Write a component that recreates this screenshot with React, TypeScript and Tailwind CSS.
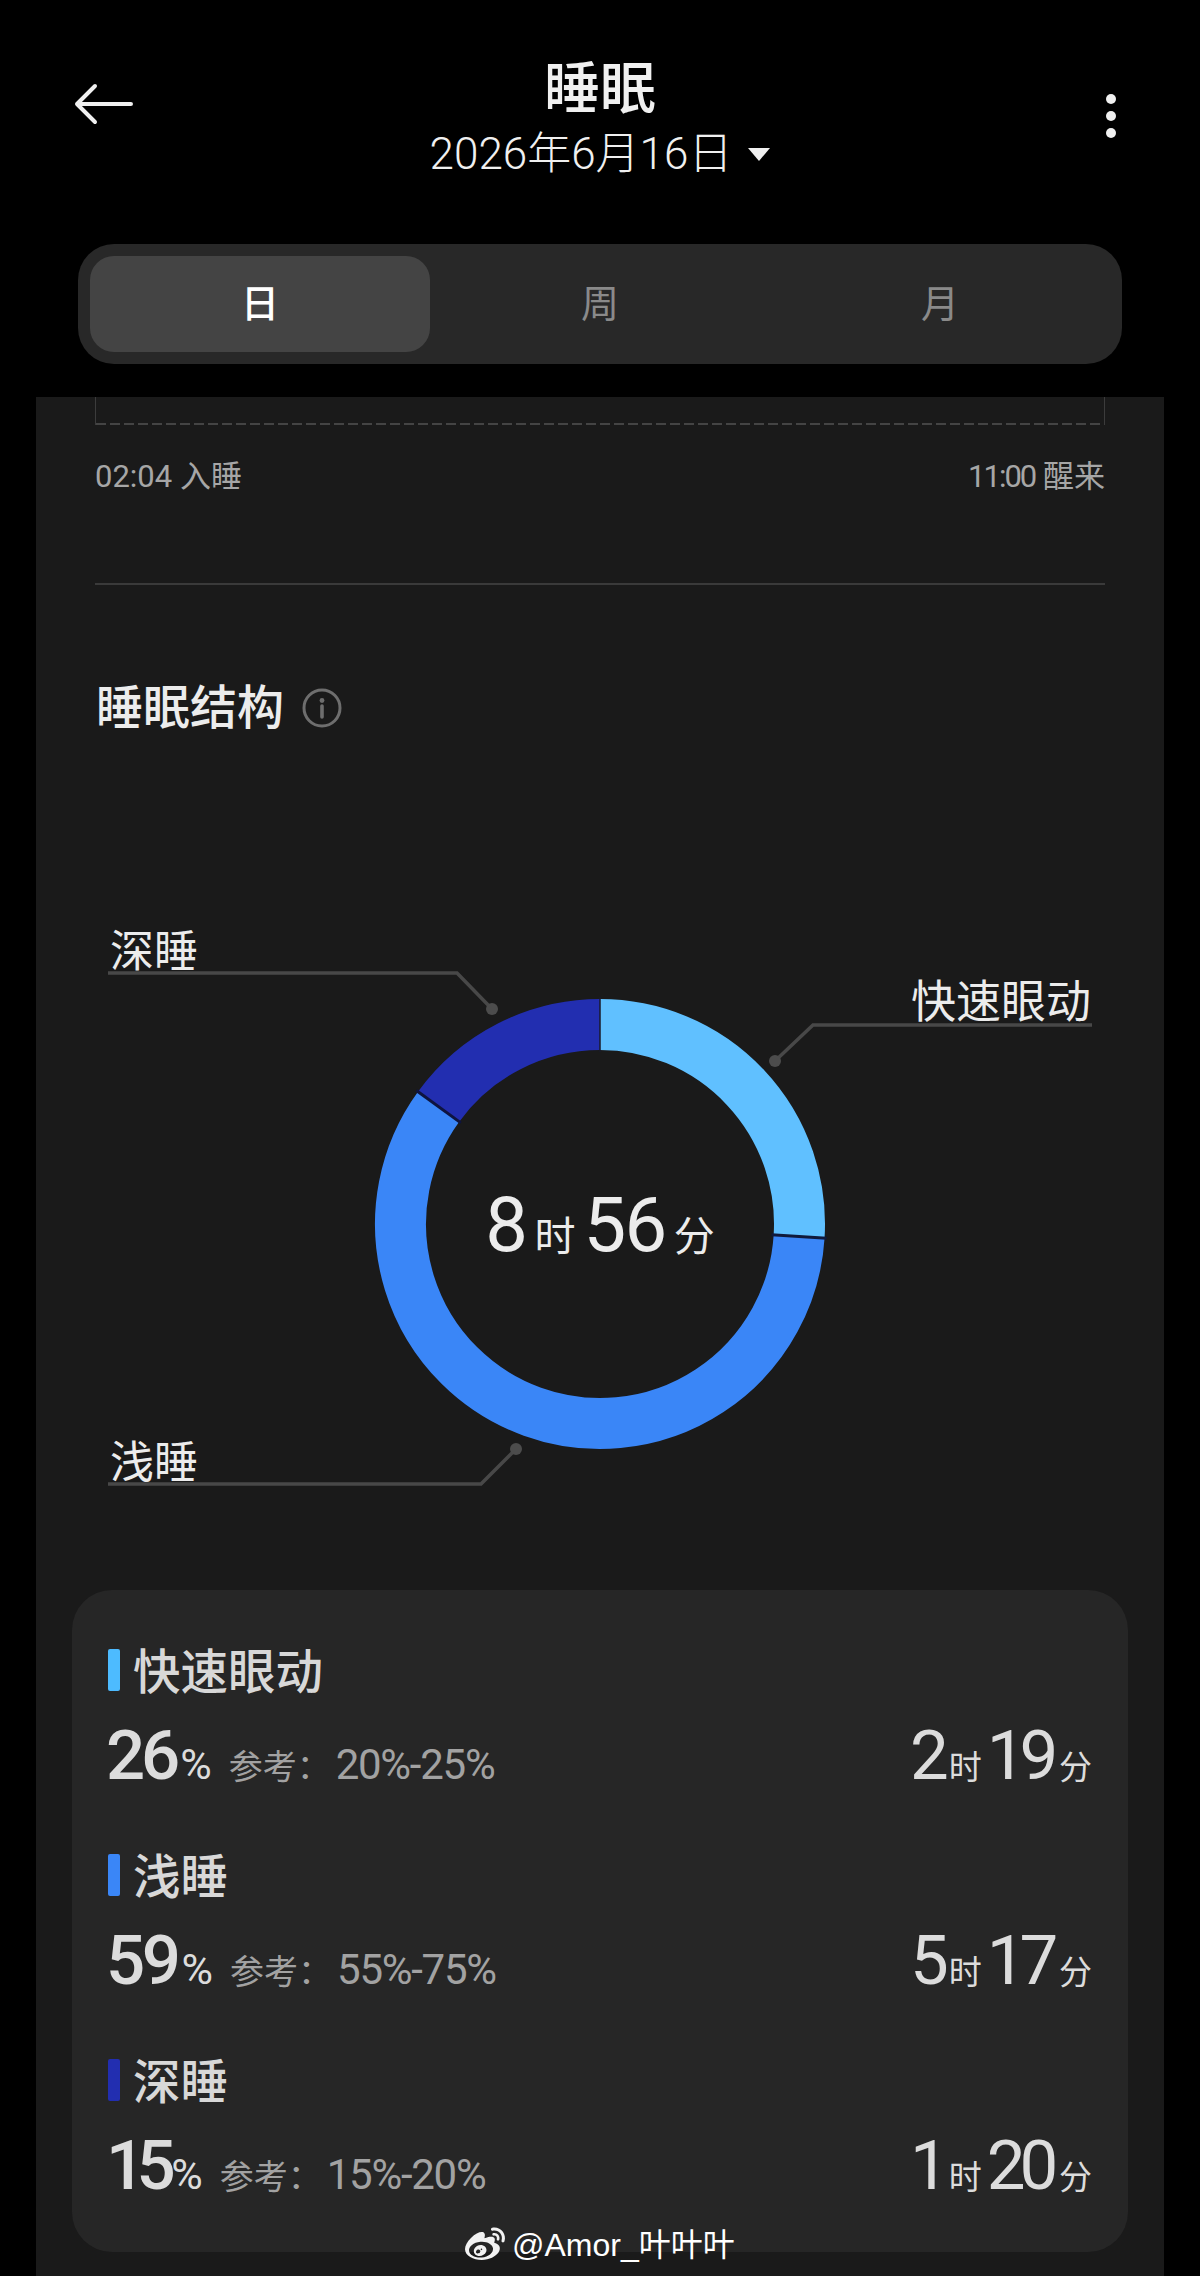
import React from 'react'
import { FaWeibo } from 'react-icons/fa'

interface IStage {
  id: string;
  name: string;
  color: string;
  percent: string;
  percentClass: string;
  range: string;
  hours: string;
  minutes: string;
}

const stages: IStage[] = [
  { id: "rem", name: "快速眼动", color: "bg-[#4dbbff]", percent: "26", percentClass: "tracking-[-0.06em]", range: "20%-25%", hours: "2", minutes: "19" },
  { id: "light", name: "浅睡", color: "bg-[#3a86f7]", percent: "59", percentClass: "tracking-[-0.05em]", range: "55%-75%", hours: "5", minutes: "17" },
  { id: "deep", name: "深睡", color: "bg-[#222eb0]", percent: "15", percentClass: "tracking-[-0.125em]", range: "15%-20%", hours: "1", minutes: "20" },
]

// donut geometry, in page coordinates
const CX = 600
const CY = 1224
const R = 199.5

const point = (deg: number, r: number) => {
  const rad = (deg * Math.PI) / 180
  return `${CX + r * Math.sin(rad)} ${CY - r * Math.cos(rad)}`
}

const arc = (from: number, to: number) =>
  `M ${point(from, R)} A ${R} ${R} 0 ${to - from > 180 ? 1 : 0} 1 ${point(to, R)}`

const Donut = () => (
  <svg className="absolute inset-0" width="1128" height="830" viewBox="36 760 1128 830" fill="none">
    <path d={arc(0, 93.6)} stroke="#60c0ff" strokeWidth="51" />
    <path d={arc(93.6, 306)} stroke="#3a86f7" strokeWidth="51" />
    <path d={arc(306, 360)} stroke="#222eb0" strokeWidth="51" />
    <path d={`M ${point(93.6, 172)} L ${point(93.6, 227)}`} stroke="#101a3c" strokeWidth="3" />
    <path d={`M ${point(306, 172)} L ${point(306, 227)}`} stroke="#0e1440" strokeWidth="3" />
    <path d={`M ${point(0, 172)} L ${point(0, 227)}`} stroke="#1a1a2a" strokeWidth="1.5" />
    <g stroke="#484848" strokeWidth="3.5">
      <path d="M108 973 H457 L492 1009" />
      <path d="M1092 1025 H813 L775 1061" />
      <path d="M108 1484 H481 L516 1449" />
    </g>
    <g fill="#4c4c4c">
      <circle cx="492" cy="1009" r="6" />
      <circle cx="775" cy="1061" r="6" />
      <circle cx="516" cy="1449" r="6" />
    </g>
  </svg>
)

const App = () => {
  return (
    <div className="relative h-[2276px] w-[1200px] overflow-hidden bg-black text-white [font-family:Roboto,'Noto_Sans_CJK_SC',sans-serif]">
      <header className="relative flex h-[244px] items-start justify-between pl-[74px] pr-[84px]">
        <svg className="mt-[83px]" width="60" height="42" viewBox="0 0 60 42" fill="none" stroke="#f0f0f0" strokeWidth="4" strokeLinecap="round" strokeLinejoin="round">
          <path d="M57 21 H3 M21 3 L3 21 L21 39" />
        </svg>
        <div className="absolute inset-x-0 top-[56px] flex flex-col items-center">
          <h1 className="text-[56px] leading-[66px] font-medium text-[#f0f0f0]">睡眠</h1>
          <div className="mt-[7px] flex items-center gap-[16px] text-[44px] leading-[50px] font-light text-[#f0f0f0]">
            <span>2026年6月16日</span>
            <span className="h-0 w-0 border-x-[11px] border-t-[13px] border-x-transparent border-t-[#f0f0f0]"></span>
          </div>
        </div>
        <div className="mt-[94px] flex flex-col gap-[7px]">
          <span className="h-[10px] w-[10px] rounded-full bg-[#f0f0f0]"></span>
          <span className="h-[10px] w-[10px] rounded-full bg-[#f0f0f0]"></span>
          <span className="h-[10px] w-[10px] rounded-full bg-[#f0f0f0]"></span>
        </div>
      </header>

      <div className="mx-[78px] grid h-[120px] w-[1044px] grid-cols-3 rounded-[36px] bg-[#282828] p-[12px] text-[38px]">
        <div className="flex items-center justify-center rounded-[24px] bg-[#444444] font-medium text-white">日</div>
        <div className="flex items-center justify-center text-[#8a8a8a]">周</div>
        <div className="flex items-center justify-center text-[#8a8a8a]">月</div>
      </div>

      <main className="mx-[36px] mt-[33px] h-[1879px] bg-[#1a1a1a]">
        <div className="mx-[59px] flex h-[28px] flex-col justify-end border-x border-[#3c3c3c]">
          <div className="h-[2px] bg-[repeating-linear-gradient(90deg,#444444_0_10px,transparent_10px_14px)]"></div>
        </div>
        <div className="mx-[59px] mt-[32px] flex justify-between text-[31px] leading-[40px] text-[#a6a6a6]">
          <span>02:04 入睡</span>
          <span><span className="tracking-[-2px]">11:00</span> 醒来</span>
        </div>
        <div className="mx-[59px] mt-[86px] h-[2px] bg-[#3a3a3a]"></div>

        <div className="mx-[60px] mt-[93px] flex h-[60px] items-center gap-[18px]">
          <h2 className="text-[47px] leading-[60px] font-medium text-[#ececec]">睡眠结构</h2>
          <svg width="40" height="40" viewBox="0 0 40 40" fill="none">
            <circle cx="20" cy="20" r="18" stroke="#6e6e6e" strokeWidth="3" />
            <circle cx="20" cy="12.5" r="2.4" fill="#6e6e6e" />
            <path d="M20 18 V29" stroke="#6e6e6e" strokeWidth="3.6" strokeLinecap="round" />
          </svg>
        </div>

        <div className="relative mt-[22px] h-[830px]">
          <Donut />
          <span className="absolute left-[74px] top-[162px] text-[44px] leading-[60px] text-[#ececec]">深睡</span>
          <span className="absolute right-[73px] top-[213px] text-[45px] leading-[60px] text-[#ececec]">快速眼动</span>
          <span className="absolute left-[74px] top-[673px] text-[44px] leading-[60px] text-[#ececec]">浅睡</span>
          <div className="absolute left-1/2 top-[423px] flex -translate-x-1/2 items-baseline gap-[8px] text-[#ececec]">
            <span className="text-[76px] leading-[84px] tracking-[-0.02em]">8</span>
            <span className="text-[41px]">时</span>
            <span className="text-[76px] leading-[84px] tracking-[-0.02em]">56</span>
            <span className="text-[41px]">分</span>
          </div>
        </div>

        <section className="mx-[36px] h-[662px] rounded-[40px] bg-[#262626] px-[36px] pt-[59px]">
          {stages.map((item: IStage) => (
            <div key={item.id} className="mb-[63px]">
              <div className="flex h-[42px] items-center gap-[13px]">
                <span className={`h-[42px] w-[12px] rounded-[2px] ${item.color}`}></span>
                <span className="pt-[5px] text-[47.5px] leading-[42px] font-medium text-[#d8d8d8]">{item.name}</span>
              </div>
              <div className="mt-[30px] flex h-[70px] items-baseline justify-between text-[#dcdcdc]">
                <div className="flex items-baseline">
                  <span className={`-ml-[2px] text-[69px] leading-[70px] font-medium ${item.percentClass}`}>{item.percent}</span>
                  <span className="ml-[4px] text-[43px] leading-[70px]">%</span>
                  <span className="ml-[17px] text-[34px] leading-[70px] text-[#a2a2a2]">参考：</span>
                  <span className="ml-[5px] text-[42px] leading-[70px] tracking-[-0.03em] text-[#a2a2a2]">{item.range}</span>
                </div>
                <div className="flex items-baseline gap-[5px]">
                  <span className="text-[69px] leading-[70px] tracking-[-0.07em]">{item.hours}</span>
                  <span className="text-[33px] leading-[70px]">时</span>
                  <span className="text-[69px] leading-[70px] tracking-[-0.09em]">{item.minutes}</span>
                  <span className="ml-[2px] text-[33px] leading-[70px]">分</span>
                </div>
              </div>
            </div>
          ))}
        </section>
      </main>

      {/* weibo watermark sits over the card edge */}
      <div className="absolute left-[462px] top-[2224px] flex items-center gap-[4px] text-white">
        <FaWeibo className="h-[40px] w-[46px] text-[#f2f2f2]" />
        <span className="text-[32px] leading-[42px] [font-family:'Liberation_Sans','Noto_Sans_CJK_SC',sans-serif]">@Amor_叶叶叶</span>
      </div>
    </div>
  )
}

export default App;
